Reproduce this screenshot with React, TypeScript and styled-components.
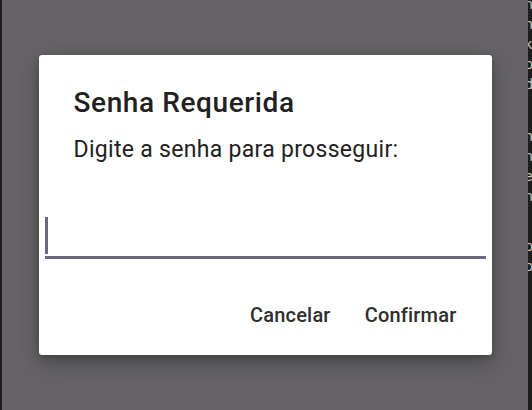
import styled, { createGlobalStyle } from 'styled-components';

const GlobalStyle = createGlobalStyle`
  html, body {
    margin: 0;
    padding: 0;
    width: 100%;
    height: 100%;
    overflow: hidden;
    background: #1d1d1d;
  }
  #root {
    height: 100%;
  }
`;

const Page = styled.div`
  display: grid;
  grid-template-columns: 2px 1fr 4px;
  width: 532px;
  height: 410px;
  font-family: Roboto, 'Noto Sans', sans-serif;
`;

const Backdrop = styled.div`
  display: flex;
  align-items: center;
  justify-content: center;
  background: #656366;
`;

const SideText = styled.div`
  overflow: hidden;
  background: #1d1d1d;
  color: #c4c4c4;
  font-size: 14px;
  line-height: 20px;
`;

const SideLine = styled.div<{ $gap?: number }>`
  margin-left: -3px;
  margin-top: ${({ $gap }) => `${$gap ?? 0}px`};
  white-space: nowrap;
`;

const Dialog = styled.div`
  display: flex;
  flex-direction: column;
  width: 453px;
  height: 300px;
  box-sizing: border-box;
  padding-top: 32px;
  background: #ffffff;
  border-radius: 3px;
  box-shadow: 0 8px 20px rgba(0, 0, 0, 0.28), 0 2px 6px rgba(0, 0, 0, 0.18);
`;

const Title = styled.h2`
  margin: 0 35px;
  font-size: 28px;
  line-height: 32px;
  letter-spacing: 0.6px;
  font-weight: 500;
  color: #212121;
`;

const Message = styled.p`
  margin: 17px 35px 0;
  font-size: 23px;
  line-height: 28px;
  letter-spacing: 0.3px;
  font-weight: 400;
  color: #222222;
`;

const Field = styled.label`
  display: flex;
  align-items: flex-start;
  height: 39px;
  margin: 51px 6px 0;
  padding-top: 2px;
  box-sizing: content-box;
  border-bottom: 3px solid #6c6980;
`;

const Caret = styled.span`
  display: block;
  width: 3px;
  height: 37px;
  background: #6c6980;
`;

const Input = styled.input`
  flex: 1;
  height: 37px;
  border: none;
  outline: none;
  background: transparent;
  caret-color: transparent;
  font-size: 20px;
  padding: 0;
`;

const Actions = styled.div`
  display: flex;
  justify-content: flex-end;
  gap: 34px;
  margin-top: 44px;
  padding-right: 35px;
`;

const ActionButton = styled.button`
  border: none;
  background: none;
  padding: 0;
  font-family: Roboto, 'Noto Sans', sans-serif;
  font-size: 20px;
  line-height: 24px;
  letter-spacing: 0.2px;
  font-weight: 500;
  color: #2e2e2e;
  cursor: pointer;
`;

export default function App() {
  return (
    <>
      <GlobalStyle />
      <Page>
        <SideText />
        <Backdrop>
          <Dialog role="dialog">
            <Title>Senha Requerida</Title>
            <Message>Digite a senha para prosseguir:</Message>
            <Field>
              <Caret />
              <Input type="password" aria-label="Senha" />
            </Field>
            <Actions>
              <ActionButton>Cancelar</ActionButton>
              <ActionButton>Confirmar</ActionButton>
            </Actions>
          </Dialog>
        </Backdrop>
        <SideText>
          <SideLine $gap={-6}>n</SideLine>
          <SideLine>n</SideLine>
          <SideLine>k</SideLine>
          <SideLine>o</SideLine>
          <SideLine>d</SideLine>
          <SideLine $gap={32}>n</SideLine>
          <SideLine>n</SideLine>
          <SideLine>e</SideLine>
          <SideLine>n</SideLine>
          <SideLine $gap={30}>o</SideLine>
          <SideLine>o</SideLine>
        </SideText>
      </Page>
    </>
  );
}
